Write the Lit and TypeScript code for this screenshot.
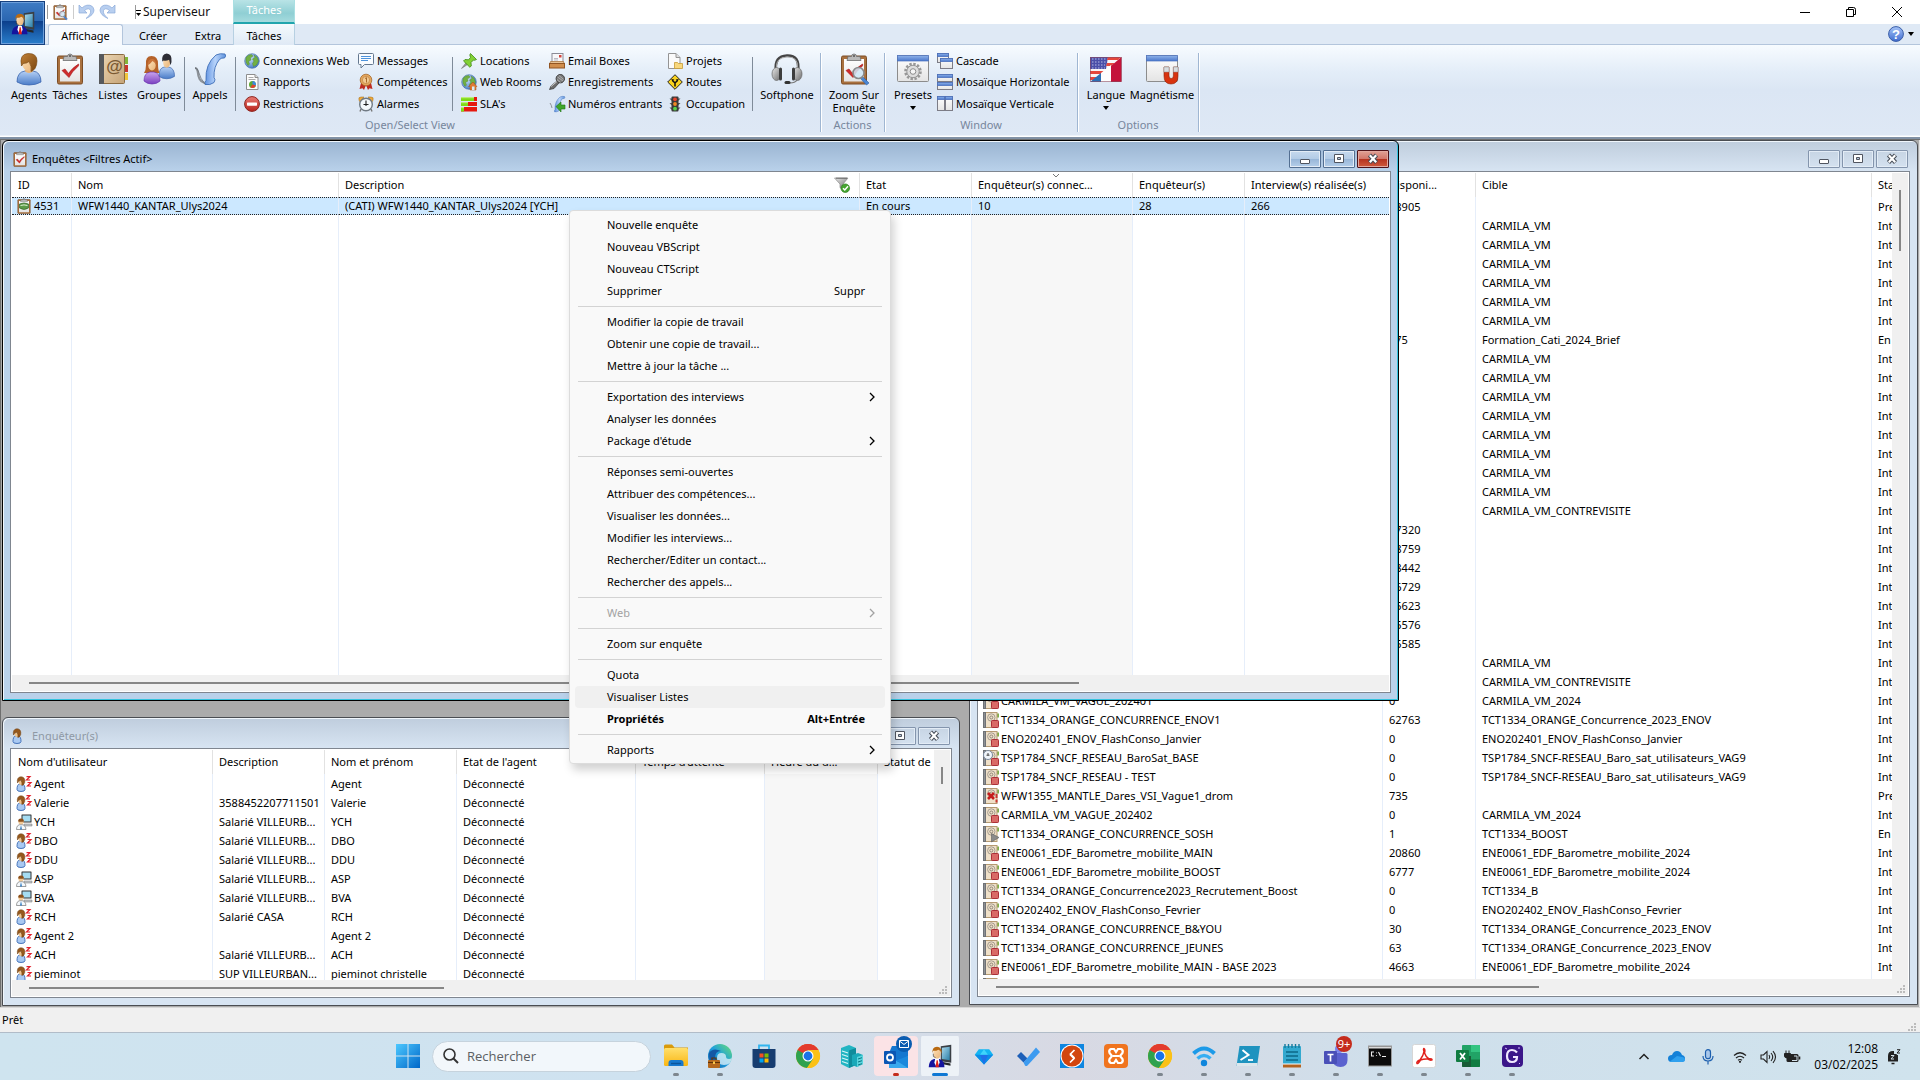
import { LitElement, html, svg, css, nothing, TemplateResult, SVGTemplateResult } from "lit";
import { customElement } from "lit/decorators.js";
import { classMap } from "lit/directives/class-map.js";
import { styleMap } from "lit/directives/style-map.js";

type Art = SVGTemplateResult;

const draw = (art: Art, size: number, box = size) =>
  html`<svg class="icon" width=${size} height=${size} viewBox="0 0 ${box} ${box}" aria-hidden="true">${art}</svg>`;

/* Shared gradients, referenced by id from every drawing of the page. */
const defs = svg`
  <linearGradient id="g-blue" x1="0" y1="0" x2="0" y2="1"><stop offset="0" stop-color="#b5d0f5"/><stop offset="1" stop-color="#4a7cc8"/></linearGradient>
  <linearGradient id="g-phone" x1="0" y1="0" x2="1" y2="0"><stop offset="0" stop-color="#5b8fe0"/><stop offset=".5" stop-color="#b7d3fa"/><stop offset="1" stop-color="#5f93dd"/></linearGradient>
  <linearGradient id="g-purple" x1="0" y1="0" x2="0" y2="1"><stop offset="0" stop-color="#c9a5ee"/><stop offset="1" stop-color="#7a3fc0"/></linearGradient>
  <linearGradient id="g-hair" x1="0" y1="0" x2="1" y2="1"><stop offset="0" stop-color="#c08037"/><stop offset="1" stop-color="#7a4610"/></linearGradient>
  <linearGradient id="g-skin" x1="0" y1="0" x2="1" y2="1"><stop offset="0" stop-color="#fde0b8"/><stop offset="1" stop-color="#e8b478"/></linearGradient>
  <linearGradient id="g-paper" x1="0" y1="0" x2="0" y2="1"><stop offset="0" stop-color="#ffffff"/><stop offset="1" stop-color="#e4e4e4"/></linearGradient>
  <linearGradient id="g-cover" x1="0" y1="0" x2="1" y2="1"><stop offset="0" stop-color="#e9d3b0"/><stop offset="1" stop-color="#c6a478"/></linearGradient>
  <linearGradient id="g-frame" x1="0" y1="0" x2="0" y2="1"><stop offset="0" stop-color="#8fb3ea"/><stop offset="1" stop-color="#4a78cc"/></linearGradient>
  <linearGradient id="g-metal" x1="0" y1="0" x2="1" y2="1"><stop offset="0" stop-color="#e8e8e8"/><stop offset="1" stop-color="#6d6d6d"/></linearGradient>
  <radialGradient id="g-globe" cx=".35" cy=".3" r=".8"><stop offset="0" stop-color="#cfe4fb"/><stop offset="1" stop-color="#3c72bf"/></radialGradient>
  <linearGradient id="g-red" x1="0" y1="0" x2="0" y2="1"><stop offset="0" stop-color="#ea7b74"/><stop offset="1" stop-color="#b8231c"/></linearGradient>
  <linearGradient id="g-screen" x1="0" y1="0" x2="1" y2="1"><stop offset="0" stop-color="#a9d8ec"/><stop offset="1" stop-color="#2b7fa8"/></linearGradient>
  <linearGradient id="g-win" x1="0" y1="0" x2="1" y2="1"><stop offset="0" stop-color="#4cc8ff"/><stop offset="1" stop-color="#0067c8"/></linearGradient>
  <linearGradient id="g-edge" x1="0" y1="1" x2="1" y2="0"><stop offset="0" stop-color="#0c59a4"/><stop offset=".5" stop-color="#1f9fde"/><stop offset="1" stop-color="#6be071"/></linearGradient>
  <linearGradient id="g-folder" x1="0" y1="0" x2="0" y2="1"><stop offset="0" stop-color="#ffdf6b"/><stop offset="1" stop-color="#f9b613"/></linearGradient>
  <linearGradient id="g-ball" x1="0" y1="0" x2="0" y2="1"><stop offset="0" stop-color="#a6c4f8"/><stop offset="1" stop-color="#3f6bd0"/></linearGradient>`;

const clipboard = svg`<rect x="3.500" y="3" width="25" height="28" rx="1.500" fill="#a9713f" stroke="#7c4d25"/>
  <rect x="6" y="6" width="20" height="22.500" fill="url(#g-paper)"/>
  <path d="M10 3.500h3.500a2.500 2.500 0 0 1 5 0H22l1 4H9z" fill="#b9b9b9" stroke="#6f6f6f" stroke-width=".8"/><circle cx="16" cy="3" r="1" fill="#555"/>`;
const tick = svg`<path d="M8 17.500l3-1.500 3.500 4.500Q18 15 24.500 11q.8 1-.3 2.200Q18 18.500 15 24.500z" fill="#cf2b2b" stroke="#a31515" stroke-width=".6"/>`;
const lens = svg`<path d="M24 23l7 7-2.500 2-6.500-7z" fill="#4a86d4" stroke="#2c5fa5" stroke-width=".6"/><circle cx="20.500" cy="20" r="5.500" fill="#cfe8f8" fill-opacity=".85" stroke="#8a8a8a" stroke-width="1.600"/>`;
const bust = svg`<path d="M4 29q0-10 8-11h8q8 1 8 11-5 3-12 3T4 29z" fill="url(#g-blue)" stroke="#3a65ae" stroke-width=".8"/>
  <path d="M11.500 18q4.500 4 9 0l-2-3h-5z" fill="#e8b478"/>
  <path d="M9 10q0-8 7.500-8T23 10q0 8-6.500 8T9 10z" fill="url(#g-skin)"/>
  <path d="M8.500 13Q6 1 15 .500q9-.5 9 7.500 0 4-2 7.500-1.500 2-4 3 1-5-2-10-2 2-6 2-.5 1.500-1.500 2.500z" fill="url(#g-hair)" stroke="#74430f" stroke-width=".6"/>`;
const figure = svg`<path d="M1 13.500Q1 8.500 3.500 8h3Q9 8.500 9 13.500q0 2-4 2t-4-2z" fill="#a9c9f2" stroke="#3a6ab4" stroke-width=".9"/>
  <path d="M2.500 4.500q0 4.500 2.500 4.500t2.700-4z" fill="#f0c48c"/>
  <path d="M1.500 7Q.5 1 5 .700 9.500 1 8.700 6.500 8 9.300 5.800 9.500 6.500 7 5 4 4 5 2.700 5z" fill="#96581c" stroke="#6b3c0e" stroke-width=".5"/>`;
const book = svg`<rect x="26" y="4" width="5" height="7" fill="#83b53a"/><rect x="26" y="12" width="5" height="7" fill="#c8352e"/><rect x="26" y="20" width="5" height="7" fill="#f0c53a"/>
  <rect x="6" y="1.500" width="21.500" height="29" rx="1" fill="url(#g-cover)" stroke="#8a6b42"/>
  <rect x="2" y="1" width="5" height="30" fill="#57595c"/>
  <text x="17.500" y="19" text-anchor="middle" class="at">@</text>`;
const notebook = svg`<path d="M13.500 1.500H16v4h-2.500z" fill="#7fb04a"/><rect x="2.500" y=".5" width="11.500" height="15" fill="#efe0c8" stroke="#b59a72"/><rect x=".500" y=".500" width="2" height="15" fill="#8c8f94" stroke="#6f7276"/>
  <circle cx="8.300" cy="5.500" r="3.700" fill="none" stroke="#9b948a" stroke-width=".9"/><circle cx="8.300" cy="5.500" r="1.500" fill="none" stroke="#857d72" stroke-width=".9"/>`;
const stop = svg`<rect x="8.500" y="8.500" width="7" height="7" rx=".8" fill="#d96a66" stroke="#ac2f38"/>`;
const globe = svg`<circle cx="8" cy="8" r="7.300" fill="url(#g-globe)" stroke="#3b68a8" stroke-width=".6"/>
  <path d="M2 4.500Q4 1.500 7.500 1.500L9 3 6.500 5 7 7 4.500 8.500 5.500 11 4 12.500Q1 9 2 4.500zM10 2l3 2 1.500 4-2 4-3 1.500-1-3L10 8 8.500 6 11 4.500z" fill="#72b043" stroke="#4b8426" stroke-width=".4"/>`;
const handset = svg`<path d="M22 2q4-2 9-1 1.500 2-.5 4-3-.5-5 1.500-6 7-5.500 18 2 2 0 5-4 3-9 2-1-2 1-4Q11 11 22 2z" fill="url(#g-phone)" stroke="#3f6fb8" stroke-width=".9"/>`;
const twin = svg`<rect x=".5" y="2.500" width="31" height="26" rx="1" fill="url(#g-paper)" stroke="#8c8c8c"/><rect x=".5" y="2.500" width="31" height="5.500" fill="url(#g-frame)" stroke="#4b70bd" stroke-width=".7"/>`;
const pane = (x: number, y: number, w: number, h: number) =>
  svg`<rect x=${x + 0.5} y=${y + 0.5} width=${w - 1} height=${h - 1} fill="url(#g-paper)" stroke="#7c7c86"/><rect x=${x + 0.5} y=${y + 0.5} width=${w - 1} height="3" fill="url(#g-frame)" stroke="#4b70bd" stroke-width=".8"/>`;

const supervisor = svg`<path d="M17 3l14-2v24l-14-2z" fill="#3a3f45"/><path d="M18.500 5l10.500-1.500v18L18.500 20z" fill="url(#g-screen)"/><path d="M20 24l10 2v3l-10-2z" fill="#24272b"/>
  <path d="M1 31q0-9 7-11h7q7 2 7 11z" fill="#14149e"/><path d="M9.500 20h5l1 5-3 6h-1l-3-6z" fill="#fff"/><path d="M11.500 21.500h1.500l1.500 9.500H10z" fill="#e2231a"/>
  <ellipse cx="12" cy="13" rx="5" ry="6.500" fill="url(#g-skin)"/><path d="M6 12Q5 4 12 3.500q7 .5 6 9-1-4-4-5-4 2-7 1.500z" fill="#b86a12"/><path d="M7 13q-1 5 3 5" stroke="#333" fill="none" stroke-width=".8"/>`;

const art: Record<string, Art> = {
  agent: bust,
  agentMini: svg`<g transform="scale(2)">${figure}</g>`,
  task: svg`${clipboard}${tick}`,
  zoomTask: svg`${clipboard}${tick}${lens}`,
  book,
  groups: svg`<g transform="translate(13.500 0) scale(.6 .78)"><path d="M4 30q0-11 9-12h7q10 1 10 12-6 3-13 3T4 30z" fill="url(#g-blue)" stroke="#3a65ae"/><path d="M11 10q0-7 6-7t6 7q0 9-6 9t-6-9z" fill="url(#g-skin)"/><path d="M9.500 11Q8 1 17 .500q9.500.5 8 11-1 3-2 4-1-5-2-7-5 2-9 1z" fill="#2d2d35"/></g>
    <path d="M3 12Q2 3 8.500 3T15 11q0 6 1.500 9H1q2-3 2-8z" fill="#b5622a"/><path d="M1 28q0-8 6-9h4q6 1 6 9-3 3-8 3t-8-3z" fill="url(#g-purple)" stroke="#6930ad" stroke-width=".7"/><ellipse cx="9" cy="12.500" rx="3.700" ry="5" fill="url(#g-skin)"/><path d="M4.500 12Q5 5 10 6q3 1 3.500 6-2-3-4-4-2 3-5 4z" fill="#c9743a"/>`,
  call: svg`${handset}<path d="M1 15q2 0 2.500 3 .5 5 2 8 1.500 3 5 4" fill="none" stroke="#8c9298" stroke-width="2"/><path d="M1 15q3 0 4 5t6 11" fill="none" stroke="#5c6268" stroke-width=".7"/>`,
  headset: svg`<path d="M5 18Q3 3 16 2.500T27 18" fill="none" stroke="#444" stroke-width="2.600"/><path d="M5.500 15Q4.500 4.500 16 4t10.500 11" fill="none" stroke="#aaa" stroke-width="1"/>
    <ellipse cx="5.500" cy="21" rx="4.500" ry="6.500" fill="url(#g-metal)" stroke="#666" stroke-width=".7"/><ellipse cx="26.500" cy="21" rx="4.500" ry="6.500" fill="url(#g-metal)" stroke="#666" stroke-width=".7"/>
    <rect x="8" y="14.500" width="3" height="13" rx="1.500" fill="#3d3d3d"/><rect x="21" y="14.500" width="3" height="13" rx="1.500" fill="#3d3d3d"/><path d="M26 27q-2 3-7 3" fill="none" stroke="#777" stroke-width="1.200"/><rect x="13.500" y="28" width="6" height="3" rx="1.500" fill="#333"/>`,
  presets: svg`${twin}<circle cx="16" cy="18.500" r="7.500" fill="none" stroke="#989898" stroke-width="2.600" stroke-dasharray="2.400 1.530"/><circle cx="16" cy="18.500" r="6.200" fill="#ddd" stroke="#8d8d8d" stroke-width=".9"/><circle cx="16" cy="18.500" r="2.800" fill="#f6f6f6" stroke="#8d8d8d"/>`,
  language: svg`<rect x="0" y="4" width="32" height="25" fill="#f8f6f6"/><path d="M0 4h18l-2 12H0z" fill="#4b4fa8"/><path d="M2 6h14M2 9h14M2 12h13M2 15h13" stroke="#b9bce4" stroke-width="1" stroke-dasharray="1.500 1.500"/>
    <path d="M18 4h13l-3 3H17zM17 10h8l-4 3h-5zM0 18h14l-2 3H0zM0 24h8l-3 3H0z" fill="#e5473c"/><path d="M0 29L11 20v9z" fill="#2d6fb5"/><path d="M21 13L31.500 4v25H21z" fill="#c4133a"/><path d="M11 20l10-8v17H11z" fill="#fdfdfd"/><rect x=".5" y="4.500" width="31" height="24" fill="none" stroke="#8a4a60" stroke-width=".6"/>`,
  magnet: svg`${twin}<path d="M18 14h5v9q0 2.500 2.200 2.500T27.400 23v-9h4.600v9q0 8-7 8t-7-8z" fill="#d8330f" stroke="#8d2209" stroke-width=".6"/><path d="M18 14h5v5h-5zM27.400 14H32v5h-4.600z" fill="#d9dde0" stroke="#8b8f92" stroke-width=".5"/>`,
  globe,
  report: svg`<path d="M2.500.5H11l3 3v12H2.500z" fill="#fdfdfd" stroke="#8d8d8d"/><path d="M11 .5v3h3" fill="#ddd" stroke="#8d8d8d"/><path d="M4.500 3.500h5M4.500 5.500h7" stroke="#aaa"/><circle cx="8.500" cy="10.500" r="3.500" fill="#5ea832"/><path d="M8.500 10.500V7a3.500 3.500 0 0 1 3.300 4.500z" fill="#3f86e0"/><path d="M8.500 10.500L11.800 11.500a3.500 3.500 0 0 1-5.500 1.700z" fill="#e2442f"/>`,
  deny: svg`<circle cx="8" cy="8" r="7.400" fill="url(#g-red)" stroke="#8c2620"/><rect x="3" y="6.500" width="10" height="3.200" rx=".6" fill="#fff"/>`,
  message: svg`<path d="M1.500.5h13q1 0 1 1v9q0 1-1 1h-8L3 15v-3.500H1.500q-1 0-1-1v-9q0-1 1-1z" fill="#f9fcff" stroke="#64788f"/><path d="M3 3.500h10M3 5.500h10M3 7.500h7" stroke="#4d93dc"/>`,
  medal: svg`<path d="M3 9L1.500 15l3-.8L6 16l2-5 2 5 1.500-1.800 3 .8L13 9z" fill="#bf2d22"/><circle cx="8" cy="6" r="5.800" fill="#e3a65d" stroke="#a8692a" stroke-width=".8"/><circle cx="8" cy="6" r="3.600" fill="#f3cb92" stroke="#b97c3c" stroke-width=".6"/><path d="M7 4.500l1.500-.8V8.500" fill="none" stroke="#a8692a"/>`,
  alarm: svg`<path d="M1 4Q0 1 3 1h3L1.500 5.500zM15 4q1-3-2-3h-3l4.500 4.500z" fill="#f0a93a" stroke="#9a6a1c" stroke-width=".5"/><path d="M3 13l-1 2.500M13 13l1 2.500" stroke="#777" stroke-width="1.400"/><circle cx="8" cy="8.500" r="6.300" fill="#f4f8fb" stroke="#707a84" stroke-width="1.400"/><path d="M8 4.500v5.500M5.500 8.500h5" stroke="#222" stroke-width="1.100"/>`,
  pin: svg`<path d="M.5 15.500L6 8.500l2 2z" fill="#9a9a9a" stroke="#666" stroke-width=".5"/><path d="M9.500.5l6 6-2 .8-1-.3-2.500 2.500.3 3.500-1.500 1.200L2.500 8 4 6.500l3.500.3L9.500 4.500 8.800 2z" fill="#82d136" stroke="#3f8a14" stroke-width=".8"/>`,
  webroom: svg`${globe}<path d="M7.500 12.500L12 8l4 4.500h-1V16H9v-3.500z" fill="#e07b34" stroke="#a04d16" stroke-width=".5"/><rect x="11" y="12.500" width="2.500" height="3.500" fill="#d6ecf8"/>`,
  sla: svg`<path d="M0 1h16v4H0zM0 6h16v4H0zM0 11h16v4.500H0z" fill="#e6180f"/><path d="M0 1h13v4H0zM0 6h7v4H0zM0 11h3v4.500H0z" fill="#7edb16"/><path d="M0 1.700h13M0 6.700h7M0 11.700h3" stroke="#c9f28e"/>`,
  mailbox: svg`<rect x="3" y=".5" width="11" height="10" fill="#f7f7f9" stroke="#8b8b95"/><rect x="10" y="2" width="2.500" height="2.500" fill="#d5443c"/><path d="M5 5.500h4M5 7h4" stroke="#a9a9b5" stroke-width=".8"/><path d="M1.500 8.500h13l1 3H.5z" fill="#e8c193" stroke="#a36a32" stroke-width=".7"/><rect x=".5" y="10.500" width="15" height="4.500" fill="#d18e4d" stroke="#925522"/>`,
  mic: svg`<path d="M.5 15.500L2 12l6-5 2 2-5 5.500z" fill="#6c6c6c" stroke="#383838" stroke-width=".7"/><path d="M2 12.500L8 7.500" stroke="#ccc"/><circle cx="11.300" cy="4.700" r="4.200" fill="#7b7b7b" stroke="#3f3f3f"/><path d="M8.500 3l5.500 4M10 1.500l4.500 4M8 5.500l3.500 3" stroke="#c6c6c6" stroke-width=".7"/>`,
  incoming: svg`<g transform="scale(.5)">${handset}<path d="M2 14q3 4 4 10" fill="none" stroke="#8c9298" stroke-width="2"/></g><path d="M7 10.500L12 6v3h4v4h-4v3z" fill="#3fa62a" stroke="#1d7413" stroke-width=".6"/>`,
  project: svg`<path d="M1.500.5H9l4 4v11H1.500z" fill="#fafafa" stroke="#949494"/><path d="M9 .5v4h4" fill="#dedede" stroke="#949494"/><path d="M7.500 9.500h3l.8 1h4.200v5h-8z" fill="#f8d77c" stroke="#c79a35" stroke-width=".8"/>`,
  route: svg`<path d="M8 .7L15.300 8 8 15.300.7 8z" fill="#f9d31f" stroke="#222"/><path d="M8 12.500V9L5.500 6.500M8 9l2.500-2.500" stroke="#111" stroke-width="1.500" fill="none"/><path d="M4.300 5l3 .6-2 2zM11.700 5l-3 .6 2 2z" fill="#111"/>`,
  traffic: svg`<path d="M2.500 2.500h11l-2.500 2.500H5zM2.500 7h11L11 9.500H5zM2.500 11.500h11L11 14H5z" fill="#555"/><rect x="4.500" y=".5" width="7" height="15" rx="1" fill="#3a3a3a"/><circle cx="8" cy="3.300" r="1.900" fill="#e5432c"/><circle cx="8" cy="8" r="1.900" fill="#f08a24"/><circle cx="8" cy="12.700" r="1.900" fill="#57d44a"/>`,
  cascade: svg`${pane(0, 0, 12, 10)}${pane(3, 5, 13, 11)}`,
  tileH: svg`${pane(0, 0, 16, 8)}${pane(0, 8, 16, 8)}`,
  tileV: svg`${pane(0, 0, 8, 15)}${pane(8, 0, 8, 15)}`,
  listStop: svg`${notebook}${stop}`,
  listTimer: svg`${notebook}<circle cx="5" cy="5" r="4.500" fill="#f0f5fa" stroke="#7a8aa0"/><path d="M5 3v2.500M3.500 5.200h3" stroke="#333" stroke-width=".9"/>${stop}`,
  listError: svg`${notebook}<path d="M13.500 6v4M13.500 11.500v3" stroke="#c8352e" stroke-width="2"/><path d="M5 5l6 6M11 5l-6 6" stroke="#c51c1c" stroke-width="2.600"/>`,
  listPlay: svg`${notebook}<path d="M8.500 7.500l7.500 4-7.500 4.500z" fill="#8b8b8b" stroke="#5e5e5e" stroke-width=".6"/>`,
  agentSleep: svg`${figure}<path d="M10.500.600h3.500L10.500 4H14M11.500 6.500H15L11.500 10H15" fill="none" stroke="#e1202c" stroke-width="1.200"/>`,
  agentDesk: svg`<rect x="5.500" y=".5" width="10" height="8" rx=".5" fill="#333"/><rect x="6.500" y="1.500" width="8" height="6" fill="#a5dcf2"/><path d="M8 10h8v2H8z" fill="#c2c6ca" stroke="#777" stroke-width=".5"/><path d="M.5 15.500q0-5 4.500-5t5 5z" fill="#f4f8fb" stroke="#777" stroke-width=".7"/><path d="M5 11l1 4.500H4z" fill="#2e7ac2"/><circle cx="5" cy="7.700" r="2.600" fill="#f1c895"/><path d="M2.200 7.500Q2 4.500 5 4.500t2.900 3q-3 .5-5.700 0z" fill="#8c501b"/>`,
  survey: svg`<g transform="scale(.5)">${clipboard}</g><path d="M3.500 6q4.500-2 9 0v4q-4.500 3-9 0z" fill="#5c9b48" stroke="#35672a" stroke-width=".7"/><path d="M4.500 7.500q3.500-1.200 7 0" stroke="#dcefd2" fill="none"/>`,
  funnel: svg`<path d="M.5 1h13.500L9 7v5.500l-3-1.800V7z" fill="url(#g-metal)" stroke="#8a8a8a" stroke-width=".7"/><path d="M2 1.200h11" stroke="#555" stroke-width=".8"/><circle cx="11.300" cy="11.200" r="4.300" fill="#45a52f" stroke="#27761a" stroke-width=".6"/><path d="M9 11.200l1.800 1.800L14 9.300" stroke="#fff" stroke-width="1.500" fill="none"/>`,
  undo: svg`<path d="M1 1v8h8L6.500 6.500Q11 3 12.500 6.500q1 3.500-4.500 8 8-3.500 8-8.500Q15 .5 9 1.200 6 1.800 4 4z" fill="#b8cff0" stroke="#8ba9d8" stroke-width=".7"/>`,
  redo: svg`<path d="M15 1v8H7l2.500-2.500Q5 3 3.500 6.500q-1 3.500 4.500 8Q0 11 0 6 1 .5 7 1.200 10 1.800 12 4z" fill="#b8cff0" stroke="#8ba9d8" stroke-width=".7"/>`,
  help: svg`<circle cx="8" cy="8" r="7.400" fill="url(#g-ball)" stroke="#3a5ea8"/><text x="8" y="12.500" text-anchor="middle" class="mark">?</text>`,
};

const chrome = svg`<circle cx="12" cy="12" r="12" fill="#fbbc04"/><path d="M12 12L1.600 6A12 12 0 0 1 22.400 6z" fill="#e33b2e"/><path d="M1.600 6A12 12 0 0 0 11 24l6.200-9L12 12z" fill="#2fa24f"/><path d="M12 6h10.400A12 12 0 0 1 11 24l6.200-9z" fill="#fbc116"/><path d="M1.600 6l5.200 9L12 6z" fill="#2fa24f"/><path d="M1.600 6A12 12 0 0 1 22.400 6H12L6.800 9z" fill="#e33b2e"/><circle cx="12" cy="12" r="5.500" fill="#fff"/><circle cx="12" cy="12" r="4.400" fill="#1a73e8"/>`;

interface TaskApp { name: string; art: Art; mark?: "dot" | "alert" | "bar"; state?: "alerting" | "current" }
const taskApps: TaskApp[] = [
  { name: "Explorateur de fichiers", mark: "dot", art: svg`<path d="M0 2q0-1.500 1.500-1.500H8l2.500 3H24V9H0z" fill="#d99a0b"/><rect y="4" width="24" height="18" rx="1.500" fill="url(#g-folder)"/><path d="M4.500 22v-3q0-3 3-3h9q3 0 3 3v3z" fill="#1779cf"/><path d="M7 19.500h10" stroke="#0b559c" stroke-width="1.500"/>` },
  { name: "Microsoft Edge", mark: "dot", art: svg`<circle cx="12" cy="12" r="12" fill="url(#g-edge)"/><path d="M9 14Q9 9 13.500 9T18 12.500q0 2.500 3 2.500t3-3q0 9-8 9-7 0-7-7z" fill="#e6f3fa" fill-opacity=".75"/><path d="M1 9q4-6 12-2-6 0-6 7 0 5 4 9Q1 22 1 9z" fill="#1558a5"/><rect y="16" width="12" height="8" rx="1" fill="#b5681d"/><path d="M0 18.500h12M4 16v-2h4v2" stroke="#5e3208" stroke-width="1.200" fill="none"/><rect x="5" y="17.500" width="2" height="2.500" fill="#f8c64b"/>` },
  { name: "Microsoft Store", art: svg`<path d="M7 6V1.500h10V6" fill="none" stroke="#31b4ee" stroke-width="1.800"/><path d="M.5 5h23v16q0 3-3 3h-17q-3 0-3-3z" fill="#173d70"/><path d="M7.500 9.500h4v4h-4z" fill="#f25022"/><path d="M12.500 9.500h4v4h-4z" fill="#7fba00"/><path d="M7.500 14.500h4v4h-4z" fill="#00a4ef"/><path d="M12.500 14.500h4v4h-4z" fill="#ffb900"/>` },
  { name: "Chrome", art: chrome },
  { name: "Serveurs", art: svg`<path d="M1 4l8-3 7 3v17l-7 3-8-4z" fill="#22b5c3"/><path d="M9 6.500L16 4v17l-7 3z" fill="#0f8c9c"/><path d="M2 7l6 2M2 10.500l6 2M2 14l6 2M2 17.500l6 2" stroke="#d7f6f8" stroke-width="1.300"/><path d="M12 11l6-2 5 2v9l-6 3-5-2z" fill="#19a9b9"/><path d="M17 13l6-2v9l-6 3z" fill="#5ad5de"/><path d="M18 15l4-1.300M18 18l4-1.300M18 21l4-1.300" stroke="#0b7784"/>` },
  { name: "Outlook", mark: "alert", state: "alerting", art: svg`<path d="M8 2h16v20H5V9z" fill="#1577d0"/><path d="M5 12l9.500 6L24 12v12H5z" fill="#39a9ee"/><path d="M24 12v12L12 16.500z" fill="#1b88dc"/><rect y="7" width="12" height="13" rx="1" fill="#0b56b4"/><circle cx="6" cy="13.500" r="3" fill="none" stroke="#fff" stroke-width="1.800"/>` },
  { name: "Superviseur", mark: "bar", state: "current", art: svg`<g transform="scale(.75)">${supervisor}</g>` },
  { name: "Gem", art: svg`<g transform="translate(2 2) scale(.8)"><path d="M6 4h13l5 7-11.500 12L1 11z" fill="#13b5f2"/><path d="M1 11h23L12.500 23z" fill="#0c8ce8"/><path d="M7.500 11h10l-5 12z" fill="#1f6fe8"/><path d="M7.500 11L12.500 4l5 7z" fill="#3fd4fb"/></g>` },
  { name: "To Do", art: svg`<path d="M1 12l4-4 6.500 6.500-4 4z" fill="#1d5fb8"/><path d="M7.500 18.500L20 3.500l4 4.500L11.500 21.500q-1.500 1-2.500 0z" fill="#3d9bf0"/>` },
  { name: "Bureau à distance", art: svg`<rect width="24" height="24" fill="#0f86e0"/><circle cx="12" cy="12" r="11.500" fill="#fff"/><circle cx="12" cy="12" r="10.500" fill="#d2460f"/><path d="M14.500 6l-4 4 4 4M10 10.500l4 4-4 4" fill="none" stroke="#fff" stroke-width="1.700"/>` },
  { name: "XAMPP", art: svg`<rect width="24" height="24" rx="4" fill="#f0741e"/><path d="M7 5q-2.500 1-1.500 4L8 12l-2.500 3q-1 3 1.500 4h3l2-3 2 3h3q2.500-1 1.500-4L16 12l2.500-3q1-3-1.500-4h-3l-2 3-2-3z" fill="none" stroke="#fff" stroke-width="2.200"/><path d="M9 12h6" stroke="#fff" stroke-width="2"/>` },
  { name: "Chrome 2", mark: "dot", art: chrome },
  { name: "Wi-Fi", mark: "dot", art: svg`<path d="M1.500 9.500Q12-.5 22.500 9.500" fill="none" stroke="#1c9ae8" stroke-width="4"/><path d="M5.500 14.500q6.500-6 13 0" fill="none" stroke="#35aef2" stroke-width="3.500"/><circle cx="12" cy="19" r="3.200" fill="#0f86dc"/>` },
  { name: "PowerShell", mark: "dot", art: svg`<path d="M3.500 2H24l-3 20H.5z" fill="#1e93bf"/><path d="M1 19h20.500l-.5 3H.5z" fill="#dbe6ec"/><path d="M6.500 6l6 5-8 5" fill="none" stroke="#fff" stroke-width="2"/><path d="M12 16h5" stroke="#fff" stroke-width="1.800"/>` },
  { name: "Bloc-notes", mark: "dot", art: svg`<rect x="3" y="2" width="18" height="20" rx="1" fill="#33a9cf"/><path d="M5 0v4M8.500 0v4M12 0v4M15.500 0v4M19 0v4" stroke="#167a9c" stroke-width="1.400"/><path d="M6 8h12M6 12h12M6 16h12" stroke="#0d6888" stroke-width="1.400"/><path d="M3 20h18v3.500H3z" fill="#b4631f"/><path d="M3 20h18" stroke="#fff"/>` },
  { name: "Teams", mark: "dot", art: svg`<circle cx="15" cy="5" r="4" fill="#7b83eb"/><path d="M8 9h14q1.500 0 1.500 1.500V16q0 7-7 7T8 16z" fill="#5b62cf"/><rect y="7" width="13" height="13" rx="1" fill="#4a50b8"/><path d="M3.500 10.500h6M6.500 10.500v7" stroke="#fff" stroke-width="1.700"/>` },
  { name: "Invite de commandes", mark: "dot", art: svg`<rect x=".5" y="2" width="23" height="20" fill="#0c0c0c" stroke="#9a9a9a"/><path d="M1 2.500h22v2H1z" fill="#dadada"/><path d="M6 8H3.500v4H6M8.500 8.500v.8M8.500 11v.8M10.500 8l2 4M14 12.500h4" stroke="#f0f0f0" fill="none" stroke-width="1.100"/>` },
  { name: "Acrobat", mark: "dot", art: svg`<rect x=".5" y=".5" width="23" height="23" rx="2" fill="#fff" stroke="#d6d6d6"/><path d="M5 19.500q-1-2 3-3.500 3.500-4.500 4-8.500-1-2.500 0-3 1.500 1 .5 4.500 1.500 4 4 5.500 4 0 3.500 1.500-1.500 1-4.500-1-3.500-.3-7 1-2.500 4-3.500 3.500z" fill="none" stroke="#e0201b" stroke-width="1.500"/>` },
  { name: "Excel", mark: "dot", art: svg`<rect x="6" y="1" width="18" height="22" rx="1" fill="#21a366"/><path d="M15 1h8q1 0 1 1v6h-9z" fill="#33c481"/><path d="M6 12h9v11H7q-1 0-1-1z" fill="#185c37"/><path d="M15 15.500h9V22q0 1-1 1h-8z" fill="#107c41"/><rect y="6" width="13" height="12" rx="1" fill="#107c41"/><path d="M4 9l5 6.500M9 9l-5 6.500" stroke="#fff" stroke-width="1.800"/>` },
  { name: "G", mark: "dot", art: svg`<rect x="2" y="1" width="21" height="22" rx="4" fill="#3b1689"/><path d="M17 8.500Q15 6 12 6q-5 0-5 6t5 6q5 0 5-5h-4" fill="none" stroke="#f1e8ff" stroke-width="2.200"/><path d="M5 4l2 1M19 19l1 1M18 4h2" stroke="#d8b8ff"/>` },
];

/* ---------- data ---------- */

interface Column { label: string; width?: number; shaded?: boolean; sorted?: boolean; filtered?: boolean }
interface Row { icon?: string; cells: string[]; selected?: boolean }

const surveyColumns: Column[] = [
  { label: "ID", width: 60 }, { label: "Nom", width: 267 }, { label: "Description", width: 521, filtered: true },
  { label: "Etat", width: 112 }, { label: "Enquêteur(s) connec...", width: 161, shaded: true, sorted: true },
  { label: "Enquêteur(s)", width: 112 }, { label: "Interview(s) réalisée(s)" },
];
const surveyRows: Row[] = [
  { icon: "survey", selected: true, cells: ["4531", "WFW1440_KANTAR_Ulys2024", "(CATI) WFW1440_KANTAR_Ulys2024 [YCH]", "En cours", "10", "28", "266"] },
];

const agentColumns: Column[] = [
  { label: "Nom d'utilisateur", width: 201 }, { label: "Description", width: 112 }, { label: "Nom et prénom", width: 132 },
  { label: "Etat de l'agent", width: 179 }, { label: "Temps d'attente", width: 129 }, { label: "Heure du d...", width: 113, shaded: true },
  { label: "Statut de" },
];
const agentRows: Row[] = ([
  ["Agent", "", "Agent"], ["Valerie", "3588452207711501", "Valerie"], ["YCH", "Salarié VILLEURB...", "YCH"],
  ["DBO", "Salarié VILLEURB...", "DBO"], ["DDU", "Salarié VILLEURB...", "DDU"], ["ASP", "Salarié VILLEURB...", "ASP"],
  ["BVA", "Salarié VILLEURB...", "BVA"], ["RCH", "Salarié CASA", "RCH"], ["Agent 2", "", "Agent 2"],
  ["ACH", "Salarié VILLEURB...", "ACH"], ["pieminot", "SUP VILLEURBAN...", "pieminot christelle"],
] as string[][]).map(([user, note, name]) => ({
  icon: ["YCH", "ASP", "BVA"].includes(user) ? "agentDesk" : "agentSleep",
  cells: [user, note, name, "Déconnecté", "", "", ""],
}));

const listColumns: Column[] = [
  { label: "", width: 404 }, { label: "Disponi...", width: 93 }, { label: "Cible", width: 396 }, { label: "Sta" },
];
const listRows: Row[] = ([
  ["", "", "18905", "", "Pre"],
  ...Array.from({ length: 6 }, () => ["", "", "", "CARMILA_VM", "Int"]),
  ["", "", "175", "Formation_Cati_2024_Brief", "En"],
  ...Array.from({ length: 8 }, () => ["", "", "", "CARMILA_VM", "Int"]),
  ["", "", "", "CARMILA_VM_CONTREVISITE", "Int"],
  ...["17320", "18759", "18442", "16729", "15623", "15576", "15585"].map((n) => ["", "", n, "", "Int"]),
  ["", "", "", "CARMILA_VM", "Int"],
  ["", "", "", "CARMILA_VM_CONTREVISITE", "Int"],
  ["listStop", "CARMILA_VM_VAGUE_202401", "0", "CARMILA_VM_2024", "Int"],
  ["listStop", "TCT1334_ORANGE_CONCURRENCE_ENOV1", "62763", "TCT1334_ORANGE_Concurrence_2023_ENOV", "Int"],
  ["listStop", "ENO202401_ENOV_FlashConso_Janvier", "0", "ENO202401_ENOV_FlashConso_Janvier", "Int"],
  ["listTimer", "TSP1784_SNCF_RESEAU_BaroSat_BASE", "0", "TSP1784_SNCF-RESEAU_Baro_sat_utilisateurs_VAG9", "Int"],
  ["listStop", "TSP1784_SNCF_RESEAU - TEST", "0", "TSP1784_SNCF-RESEAU_Baro_sat_utilisateurs_VAG9", "Int"],
  ["listError", "WFW1355_MANTLE_Dares_VSI_Vague1_drom", "735", "", "Pre"],
  ["listStop", "CARMILA_VM_VAGUE_202402", "0", "CARMILA_VM_2024", "Int"],
  ["listPlay", "TCT1334_ORANGE_CONCURRENCE_SOSH", "1", "TCT1334_BOOST", "En"],
  ["listStop", "ENE0061_EDF_Barometre_mobilite_MAIN", "20860", "ENE0061_EDF_Barometre_mobilite_2024", "Int"],
  ["listStop", "ENE0061_EDF_Barometre_mobilite_BOOST", "6777", "ENE0061_EDF_Barometre_mobilite_2024", "Int"],
  ["listStop", "TCT1334_ORANGE_Concurrence2023_Recrutement_Boost", "0", "TCT1334_B", "Int"],
  ["listStop", "ENO202402_ENOV_FlashConso_Fevrier", "0", "ENO202402_ENOV_FlashConso_Fevrier", "Int"],
  ["listStop", "TCT1334_ORANGE_CONCURRENCE_B&YOU", "30", "TCT1334_ORANGE_Concurrence_2023_ENOV", "Int"],
  ["listStop", "TCT1334_ORANGE_CONCURRENCE_JEUNES", "63", "TCT1334_ORANGE_Concurrence_2023_ENOV", "Int"],
  ["listStop", "ENE0061_EDF_Barometre_mobilite_MAIN - BASE 2023", "4663", "ENE0061_EDF_Barometre_mobilite_2024", "Int"],
  ["listStop", "", "", "", ""],
] as string[][]).map(([icon, ...cells]) => ({ icon: icon || undefined, cells }));

interface Entry { label: string; keys?: string; sub?: boolean; off?: boolean; hot?: boolean; strong?: boolean }
const menuGroups: Entry[][] = [
  [{ label: "Nouvelle enquête" }, { label: "Nouveau VBScript" }, { label: "Nouveau CTScript" }, { label: "Supprimer", keys: "Suppr" }],
  [{ label: "Modifier la copie de travail" }, { label: "Obtenir une copie de travail..." }, { label: "Mettre à jour la tâche ..." }],
  [{ label: "Exportation des interviews", sub: true }, { label: "Analyser les données" }, { label: "Package d'étude", sub: true }],
  [{ label: "Réponses semi-ouvertes" }, { label: "Attribuer des compétences..." }, { label: "Visualiser les données..." },
   { label: "Modifier les interviews..." }, { label: "Rechercher/Editer un contact..." }, { label: "Rechercher des appels..." }],
  [{ label: "Web", sub: true, off: true }],
  [{ label: "Zoom sur enquête" }],
  [{ label: "Quota" }, { label: "Visualiser Listes", hot: true }, { label: "Propriétés", keys: "Alt+Entrée", strong: true }],
  [{ label: "Rapports", sub: true }],
];

@customElement("app-root")
export class AppRoot extends LitElement {
  static styles = css`
    :host { display: flex; flex-direction: column; height: 100vh; overflow: hidden; background: #fff; color: #000;
      font: 11px/16px "Noto Sans", "Open Sans", "Liberation Sans", sans-serif; cursor: default; }
    * { box-sizing: border-box; }
    button { font: inherit; color: inherit; background: none; border: 0; padding: 0; margin: 0; white-space: nowrap; }
    .icon { display: block; flex: none; overflow: visible; }
    .defs { position: absolute; width: 0; height: 0; }
    .at { font: bold 17px "Liberation Sans", sans-serif; fill: #7b5a33; }
    .mark { font: bold 13px "Liberation Sans", sans-serif; fill: #fff; }

    /* title bar and tabs */
    .top { display: grid; grid-template-columns: 45px 1fr; height: 45px; flex: none; }
    .app { display: grid; place-items: center; margin: 1px 0 0; border: 1px solid #16407e; box-shadow: inset 0 0 0 1px #6d9fdb;
      background: linear-gradient(#3f7cc4, #2a65b0 45%, #0c3f8c 46%, #2a7ecb); }
    .heads { display: flex; flex-direction: column; min-width: 0; }
    .title { display: flex; align-items: center; height: 24px; padding-left: 2px; }
    .quick { display: flex; align-items: center; width: 96px; height: 16px; }
    .quick .rule { width: 1px; height: 14px; background: #9a9a9a; margin-right: 4px; }
    .quick .rule.second { margin: 0 4px 0 5px; background: #ccc; }
    .quick button + button { margin-left: 6px; }
    .quick .more { margin-left: auto; padding-right: 2px; }
    .name { flex: none; width: 90px; color: #111; white-space: nowrap; font-size: 12px; }
    .context { width: 62px; height: 24px; text-align: center; color: #fff; line-height: 20px; border: 1px solid #a9dfe2; border-width: 0 1px 2px;
      border-bottom-color: #21a5ad; background: linear-gradient(#b9e3e6, #8fcfd4 60%, #a5dbde); }
    .sys { margin-left: auto; display: flex; }
    .sys button { width: 46px; height: 22px; display: grid; place-items: center; }
    .tabs { display: flex; height: 21px; padding-left: 3px; background: #dfe9f5; border-bottom: 1px solid #b3c5dc; }
    .tab { height: 21px; text-align: center; padding-top: 2px; }
    .tab.on { background: #f7fafe; border: 1px solid #b3c5dc; border-bottom: 0; border-radius: 3px 3px 0 0; padding-top: 1px; }
    .tab.ctx { border: solid #b7d0e2; border-width: 0 1px; background: linear-gradient(#f4fafd, #dfe9f5); }
    .w75 { width: 75px; } .w60 { width: 60px; } .w50 { width: 50px; } .w62 { width: 62px; }
    .help { margin-left: auto; display: flex; align-items: center; gap: 4px; padding-right: 6px; }
    .caret { width: 0; height: 0; border: 3px solid transparent; border-top: 4px solid #000; border-bottom: 0; margin: 0 auto; }

    /* ribbon */
    .ribbon { display: flex; height: 91px; flex: none; background: linear-gradient(#f7fbff, #e3edf8 30%, #dbe6f4 50%, #dee8f5); border-bottom: 1px solid #edf3fb; }
    .group { display: flex; flex-direction: column; justify-content: space-between; margin: 8px 0 3px; border-right: 1px solid #9fb6d2; box-shadow: 1px 0 #fff; }
    .tools { display: flex; height: 64px; padding-left: 4px; }
    .group:first-child .tools { padding-left: 8px; }
    .group h2 { margin: 0; font-weight: 400; font-size: 11px; line-height: 14px; text-align: center; color: #77869c; }
    .big { display: flex; flex-direction: column; align-items: center; flex: none; line-height: 13px; white-space: normal; text-align: center; }
    .big span { margin-top: 3px; }
    .big .caret { margin-top: 5px; }
    .stack { display: flex; flex-direction: column; flex: none; }
    .small { display: flex; align-items: center; gap: 3px; height: 22px; padding-bottom: 5px; }
    .split { width: 1px; height: 54px; margin: 4px 2px 0; background: #7f8b99; flex: none; }
    .split + .stack { margin-left: 6px; }

    /* desktop with floating windows */
    .desk { position: relative; flex: 1; min-height: 0; background: #ababab; border-top: 2px solid #8292a6; box-shadow: inset 1px 1px #6e6e6e, inset -1px 0 #e3e3e3; margin-top: 1px; overflow: hidden; }
    .window { position: absolute; display: flex; flex-direction: column; padding: 0 7px 7px; border: 1px solid #4a4d52; border-radius: 6px 6px 0 0; background: linear-gradient(#bfcddd, #d7e4f2 30px); box-shadow: inset 1px 1px #f0f6fc; }
    .window.active { border-color: #000; background: linear-gradient(#9ab4d1, #b9d1ea 30px); box-shadow: inset 1px 1px #f0f6fc, inset -1px -1px #35c3de; }
    .surveys { left: 2px; top: 1px; width: 1397px; height: 561px; }
    .agents { left: 2px; top: 578px; width: 958px; height: 289px; }
    .lists { left: 969px; right: 2px; top: 1px; height: 865px; }
    .bar { display: flex; align-items: center; height: 30px; padding: 6px 2px 0; gap: 4px; flex: none; }
    .bar h1 { margin: 0; flex: 1; font-size: 11px; font-weight: 400; line-height: 16px; }
    .window:not(.active) h1 { color: #8f99a5; }
    .ctl { width: 32px; height: 18px; display: grid; place-items: center; border: 1px solid #8495ad; border-radius: 1px; box-shadow: inset 0 0 0 1px #e3ecf6; }
    .bar .ctls { display: flex; gap: 2px; }
    .active .ctl { border-color: #536f92; background: linear-gradient(#c6d9ee, #b2cbe6 50%, #98b6d8 51%, #b5cfea); }
    .active .ctl.close { border-color: #4e1219; background: linear-gradient(#e0a196, #d2766a 50%, #b5321f 51%, #cf5a3d); box-shadow: inset 0 0 0 1px #e2a89f; }
    .view { flex: 1; min-height: 0; display: grid; grid-template-columns: minmax(0, 1fr) auto; grid-template-rows: minmax(0, 1fr) 16px; padding: 1px; background: #fff; border: 1px solid #7f8690; }
    .pane { overflow: hidden; }
    .hbar { grid-column: 1 / -1; display: flex; align-items: center; background: #f0f0f0; padding-left: 17px; }
    .hbar .thumb { height: 2px; background: #868686; }
    .hbar .grip { margin: 4px 2px 0 auto; }
    .vbar { width: 16px; background: #f0f0f0; padding-top: 17px; }
    .vbar .thumb { width: 2px; margin: 0 auto; background: #868686; }

    table { width: 100%; height: 100%; table-layout: fixed; border-collapse: separate; border-spacing: 0; }
    th, td { padding: 0 0 0 6px; font-weight: 400; text-align: left; white-space: nowrap; overflow: hidden; vertical-align: middle; }
    th { height: 24px; border-right: 1px solid #e2e2e2; position: relative; line-height: 20px; }
    td { height: 19px; line-height: 18px; border-right: 1px solid #e6eefa; }
    th:last-child, td:last-child { border-right: 0; }
    .iconed { padding-left: 4px; }
    .iconed div { display: flex; align-items: center; gap: 2px; height: 19px; }
    .shaded { background: #f7f7f7; }
    .selected td { background: #cce8ff; height: 18px; border-top: 1px dotted #222; border-bottom: 1px dotted #222; line-height: 16px; }
    .selected .iconed div { height: 16px; }
    .fill td { height: auto; }
    .head { display: flex; justify-content: space-between; align-items: center; padding-right: 9px; height: 23px; }
    .sort { position: absolute; left: 50%; top: 1px; }

    /* context menu */
    .menu { position: absolute; left: 569px; top: 71px; width: 322px; margin: 0; padding: 3px 5px 2px; background: #f9f9f9; border: 1px solid #dcdcdc; border-radius: 4px; box-shadow: 3px 6px 10px rgba(0, 0, 0, .18); }
    .entry { display: flex; justify-content: space-between; align-items: center; width: 100%; height: 22px; padding: 0 20px 0 32px; border-radius: 4px; }
    .entry.sub { padding-right: 10px; }
    .entry.hot { background: #f0f0f0; }
    .entry:disabled { color: #a2a2a2; }
    .strong { font-weight: 700; }
    .menu hr { margin: 4px 3px; border: 0; height: 1px; background: #d3d3d3; }

    /* status bar */
    .status { display: flex; justify-content: space-between; align-items: center; flex: none; height: 26px; padding: 0 3px 0 2px; background: #f0f0f0; border-top: 1px solid #d7d7d7; box-shadow: 0 -2px #fafafa; border-bottom: 1px solid #b1bcc8; }
    .status .grip { align-self: end; }

    /* taskbar */
    .taskbar { display: grid; grid-template-columns: 1fr auto 1fr; align-items: center; flex: none; height: 47px; background: linear-gradient(90deg, #cfe4ef, #cfe2f0 35%, #d8d9e3 56%, #cfdfeb 72%, #d0e3ed); }
    .mid { grid-column: 2; display: flex; align-items: center; padding-bottom: 1px; }
    .start { width: 44px; display: grid; place-items: center; }
    .search { display: flex; align-items: center; gap: 8px; width: 219px; height: 31px; margin: 0 3px 0 2px; padding: 0 12px 0 10px; border-radius: 16px; background: #f2f7fb; border: 1px solid #c6d3dd; }
    .search input { width: 150px; border: 0; padding: 0; background: none; outline: 0; font: 13px/20px "Open Sans", sans-serif; color: #5b5f63; }
    .search input::placeholder { color: #5b5f63; opacity: 1; }
    .pinned { position: relative; width: 44px; height: 40px; display: grid; place-items: center; border-radius: 4px; }
    .pinned::after { content: ""; position: absolute; bottom: 0; left: 50%; margin-left: -3px; width: 6px; height: 3px; border-radius: 2px; background: transparent; }
    .pinned.dot::after { background: #7d868e; }
    .pinned.alert::after { background: #c42b1c; }
    .pinned.bar-mark::after { background: #0f78d4; width: 16px; margin-left: -8px; }
    .alerting { background: #fbe3e6; background-clip: padding-box; }
    .current { background: #edf2f7; background-clip: content-box; padding: 0 3px; }
    .badge { position: absolute; right: 6px; top: 0; width: 16px; height: 16px; border-radius: 8px; display: grid; place-items: center; color: #fff; line-height: 16px; background: #c42b1c; }
    .badge.mail { background: #0a5cb0; }
    .tray { grid-column: 3; justify-self: end; display: flex; align-items: center; padding-right: 19px; }
    .tray button { display: grid; place-items: center; }
    .t32 { width: 32px; } .t24 { width: 24px; }
    .clock { width: 74px; margin-right: 8px; text-align: right; font: 12px/16px "Open Sans", sans-serif; }
  `;

  private tab(label: string, cls: string, on = false) {
    return html`<button class="tab ${cls} ${on ? "on" : ""}" role="tab" aria-selected=${on ? "true" : "false"}>${label}</button>`;
  }

  private big(label: string, icon: string, width: number, caret = false) {
    return html`<button class="big" style=${styleMap({ width: `${width}px` })}>${draw(art[icon], 32)}<span>${label}</span>${caret ? html`<i class="caret"></i>` : nothing}</button>`;
  }

  private stack(width: number, items: [string, string][]) {
    return html`<div class="stack" style=${styleMap({ width: `${width}px` })}>
      ${items.map(([label, icon]) => html`<button class="small">${draw(art[icon], 16)}<span>${label}</span></button>`)}</div>`;
  }

  private group(label: string, width: number, tools: TemplateResult) {
    return html`<section class="group" style=${styleMap({ width: `${width}px` })}><div class="tools">${tools}</div><h2>${label}</h2></section>`;
  }

  private grip() {
    return html`<svg class="icon grip" width="9" height="9" aria-hidden="true"><path d="M6 0h2v2H6zM3 3h2v2H3zM6 3h2v2H6zM0 6h2v2H0zM3 6h2v2H3zM6 6h2v2H6z" fill="#bcbcbc"/></svg>`;
  }

  private table(columns: Column[], rows: Row[], label: string) {
    return html`<table aria-label=${label}>
      <colgroup>${columns.map((c) => html`<col style=${styleMap(c.width ? { width: `${c.width}px` } : {})}>`)}</colgroup>
      <thead><tr>${columns.map((c) => html`<th scope="col">
        ${c.filtered ? html`<div class="head"><span>${c.label}</span>${draw(art.funnel, 16)}</div>` : c.label}
        ${c.sorted ? html`<svg class="sort" width="8" height="5" aria-hidden="true"><path d="M1 0l3 3 3-3" fill="none" stroke="#777"/></svg>` : nothing}</th>`)}</tr></thead>
      <tbody>
        ${rows.map((r) => html`<tr class=${r.selected ? "selected" : ""}>${r.cells.map((cell, i) => i === 0 && r.icon
          ? html`<td class="iconed"><div>${draw(art[r.icon], 16)}<span>${cell}</span></div></td>`
          : html`<td class=${columns[i].shaded ? "shaded" : ""}>${cell}</td>`)}</tr>`)}
        <tr class="fill">${columns.map((c) => html`<td class=${c.shaded ? "shaded" : ""}></td>`)}</tr>
      </tbody></table>`;
  }

  private window(cls: string, title: string, icon: string, active: boolean, body: TemplateResult, thumb: number, vthumb?: number) {
    const ctl = (name: string, kind: string, shape: Art) =>
      html`<button class="ctl ${kind}" aria-label=${name}><svg class="icon" width="12" height="12" aria-hidden="true">${shape}</svg></button>`;
    return html`<section class=${classMap({ window: true, active, [cls]: true })}>
      <header class="bar">
        ${draw(art[icon], 16, 32)}<h1>${title}</h1>
        <div class="ctls">
          ${ctl("Réduire", "min", svg`<rect x="1.500" y="6.500" width="9" height="4" rx=".5" fill="#fff" stroke="#505560"/>`)}
          ${ctl("Agrandir", "max", svg`<path d="M1.500 1.500h9v8h-9z" fill="#fff" stroke="#505560"/><path d="M4.500 4.500h3v2h-3z" fill="#b4c8de" stroke="#505560"/>`)}
          ${ctl("Fermer", "close", svg`<path d="M2.500 2l7 7.500M9.500 2l-7 7.500" stroke="#454b55" stroke-width="4.200"/><path d="M2.800 2.200l6.400 7M9.200 2.200l-6.400 7" stroke="#fff" stroke-width="2.200"/>`)}
        </div>
      </header>
      <div class="view">
        <div class="pane">${body}</div>
        ${vthumb ? html`<div class="vbar"><div class="thumb" style=${styleMap({ height: `${vthumb}px` })}></div></div>` : html`<span></span>`}
        <div class="hbar"><div class="thumb" style=${styleMap({ width: `${thumb}px` })}></div>${vthumb ? this.grip() : nothing}</div>
      </div>
    </section>`;
  }

  private menu() {
    return html`<div class="menu" role="menu">
      ${menuGroups.map((g, i) => html`${i ? html`<hr>` : nothing}${g.map((e) => html`
        <button role="menuitem" class=${classMap({ entry: true, sub: !!e.sub, hot: !!e.hot, strong: !!e.strong })} ?disabled=${!!e.off}>
          <span>${e.label}</span>
          ${e.keys ? html`<span>${e.keys}</span>` : nothing}
          ${e.sub ? html`<svg class="icon" width="6" height="10" aria-hidden="true"><path d="M1 1l4 4-4 4" fill="none" stroke="currentColor" stroke-width="1.300"/></svg>` : nothing}
        </button>`)}`)}
    </div>`;
  }

  render() {
    return html`
      <svg class="defs" aria-hidden="true"><defs>${defs}</defs></svg>
      <header class="top">
        <button class="app" aria-label="Menu de l'application">${draw(supervisor, 24, 32)}</button>
        <div class="heads">
          <div class="title">
            <div class="quick">
              <i class="rule"></i><button aria-label="Zoom">${draw(art.zoomTask, 16, 32)}</button><i class="rule second"></i>
              <button aria-label="Annuler">${draw(art.undo, 16)}</button><button aria-label="Rétablir">${draw(art.redo, 16)}</button>
              <button class="more" aria-label="Personnaliser"><svg class="icon" width="6" height="14"><path d="M.5 0v14" stroke="#999"/><path d="M1 5.500h5" stroke="#000"/><path d="M1 8h5L3.500 11z" fill="#000"/></svg></button>
            </div>
            <span class="name">Superviseur</span>
            <div class="context">Tâches</div>
            <div class="sys">
              <button aria-label="Réduire"><svg class="icon" width="10" height="10"><path d="M0 5.500h10" stroke="#000"/></svg></button>
              <button aria-label="Niveau inférieur"><svg class="icon" width="10" height="10"><path d="M.5 2.500h7v7h-7zM2.500 2.500v-2h5q2 0 2 2v5h-2" fill="none" stroke="#000"/></svg></button>
              <button aria-label="Fermer"><svg class="icon" width="10" height="10"><path d="M0 0l10 10M10 0L0 10" stroke="#000"/></svg></button>
            </div>
          </div>
          <nav class="tabs" role="tablist">
            ${this.tab("Affichage", "w75", true)}${this.tab("Créer", "w60")}${this.tab("Extra", "w50")}${this.tab("Tâches", "ctx w62")}
            <button class="help" aria-label="Aide">${draw(art.help, 16)}<i class="caret"></i></button>
          </nav>
        </div>
      </header>
      <div class="ribbon">
        ${this.group("Open/Select View", 821, html`
          ${this.big("Agents", "agent", 42)}${this.big("Tâches", "task", 40)}${this.big("Listes", "book", 46)}${this.big("Groupes", "groups", 46)}
          <i class="split"></i>${this.big("Appels", "call", 46)}<i class="split"></i>
          ${this.stack(114, [["Connexions Web", "globe"], ["Rapports", "report"], ["Restrictions", "deny"]])}
          ${this.stack(92, [["Messages", "message"], ["Compétences", "medal"], ["Alarmes", "alarm"]])}
          <i class="split"></i>
          ${this.stack(88, [["Locations", "pin"], ["Web Rooms", "webroom"], ["SLA's", "sla"]])}
          ${this.stack(118, [["Email Boxes", "mailbox"], ["Enregistrements", "mic"], ["Numéros entrants", "incoming"]])}
          ${this.stack(83, [["Projets", "project"], ["Routes", "route"], ["Occupation", "traffic"]])}
          <i class="split"></i>${this.big("Softphone", "headset", 64)}`)}
        ${this.group("Actions", 64, html`${this.big("Zoom Sur Enquête", "zoomTask", 58)}`)}
        ${this.group("Window", 193, html`${this.big("Presets", "presets", 48, true)}
          ${this.stack(140, [["Cascade", "cascade"], ["Mosaïque Horizontale", "tileH"], ["Mosaïque Verticale", "tileV"]])}`)}
        ${this.group("Options", 121, html`${this.big("Langue", "language", 48, true)}${this.big("Magnétisme", "magnet", 64)}`)}
      </div>
      <main class="desk">
        ${this.window("lists", "", "book", false, this.table(listColumns, listRows, "Listes"), 543, 61)}
        ${this.window("agents", "Enquêteur(s)", "agentMini", false, this.table(agentColumns, agentRows, "Enquêteurs"), 415, 17)}
        ${this.window("surveys", "Enquêtes <Filtres Actif>", "task", true, this.table(surveyColumns, surveyRows, "Enquêtes"), 1050)}
        ${this.menu()}
      </main>
      <footer class="status"><span>Prêt</span>${this.grip()}</footer>
      <div class="taskbar">
        <div class="mid">
          <button class="start" aria-label="Démarrer">${draw(svg`<path d="M0 0h11.500v11.500H0zM12.500 0H24v11.500H12.500zM0 12.500h11.500V24H0zM12.500 12.500H24V24H12.500z" fill="url(#g-win)"/>`, 24)}</button>
          <label class="search"><svg class="icon" width="16" height="16" aria-hidden="true"><circle cx="6.500" cy="6.500" r="5.500" fill="none" stroke="#333" stroke-width="1.600"/><path d="M10.500 10.500l4.500 4.500" stroke="#333" stroke-width="1.900"/></svg>
            <input type="search" placeholder="Rechercher" aria-label="Rechercher"></label>
          ${taskApps.map((a) => html`<button aria-label=${a.name} class=${classMap({ pinned: true, dot: a.mark === "dot", alert: a.mark === "alert", "bar-mark": a.mark === "bar", alerting: a.state === "alerting", current: a.state === "current" })}>
            ${draw(a.art, 24)}
            ${a.name === "Teams" ? html`<span class="badge">9+</span>` : nothing}
            ${a.name === "Outlook" ? html`<span class="badge mail"><svg class="icon" width="10" height="8"><path d="M.5.5h9v7h-9zM.5 1L5 4.500 9.500 1" fill="none" stroke="#fff"/></svg></span>` : nothing}
          </button>`)}
        </div>
        <div class="tray">
          <button class="t32" aria-label="Icônes cachées"><svg class="icon" width="12" height="8"><path d="M1.500 6L6 1.500 10.500 6" fill="none" stroke="#222" stroke-width="1.500"/></svg></button>
          <button class="t32" aria-label="OneDrive"><svg class="icon" width="17" height="11"><path d="M4 11q-4 0-4-3.500T4 4q1.500-4 5-4t5 4q3 .5 3 3.500t-3 3.500z" fill="#1481d8"/><path d="M2 10.500L9 5l5 1q3 .5 3 2.500 0 2.500-3 2.500H4q-1.200 0-2-.5z" fill="#2fa0ee"/></svg></button>
          <button class="t32" aria-label="Microphone"><svg class="icon" width="12" height="16"><rect x="3.500" y=".7" width="5" height="9" rx="2.500" fill="#a8c7ea" stroke="#1d5fae" stroke-width="1.200"/><path d="M1 7q0 5 5 5t5-5M6 12v3.500" fill="none" stroke="#1d5fae" stroke-width="1.200"/></svg></button>
          <button class="t32" aria-label="Réseau"><svg class="icon" width="14" height="12"><path d="M1 4.500q6-5.500 12 0M3 7q4-3.500 8 0M5 9.300q2-1.600 4 0" fill="none" stroke="#222" stroke-width="1.200"/><circle cx="7" cy="10.800" r="1.100" fill="#222"/></svg></button>
          <button class="t24" aria-label="Volume"><svg class="icon" width="17" height="14"><path d="M1 5h2.500L7 1.500v11L3.500 9H1z" fill="none" stroke="#222" stroke-width="1.100"/><path d="M9 5q1.500 2 0 4M11 3q3.500 4 0 8M13 1.200q5 5.800 0 11.600" fill="none" stroke="#222" stroke-width="1.100"/></svg></button>
          <button class="t24" aria-label="Batterie"><svg class="icon" width="17" height="13"><rect x="2.500" y="4" width="12" height="8" rx="1.500" fill="#222"/><path d="M15.500 6.500v3" stroke="#222" stroke-width="1.600"/><path d="M2 .5v3M5 .5v3M.5 3.500h6V6q0 2-3 2t-3-2z" stroke="#222" fill="#222"/><path d="M8 10.500h5V6h-3" fill="none" stroke="#d3e1ea"/></svg></button>
          <div class="clock">12:08<br>03/02/2025</div>
          <button aria-label="Notifications"><svg class="icon" width="15" height="16"><path d="M2 12.500V7q0-5 5-5h1v4h4v6.500h1H1z" fill="#222"/><path d="M5.500 14.500h3" stroke="#222" stroke-width="1.500"/><path d="M7.500 5.500h3l-3 3h3M11 .700h3l-3 3.300h3" fill="none" stroke="#222"/><path d="M5 6.500h3L5 10h3" stroke="#d3e1ea" fill="none"/></svg></button>
        </div>
      </div>`;
  }
}
